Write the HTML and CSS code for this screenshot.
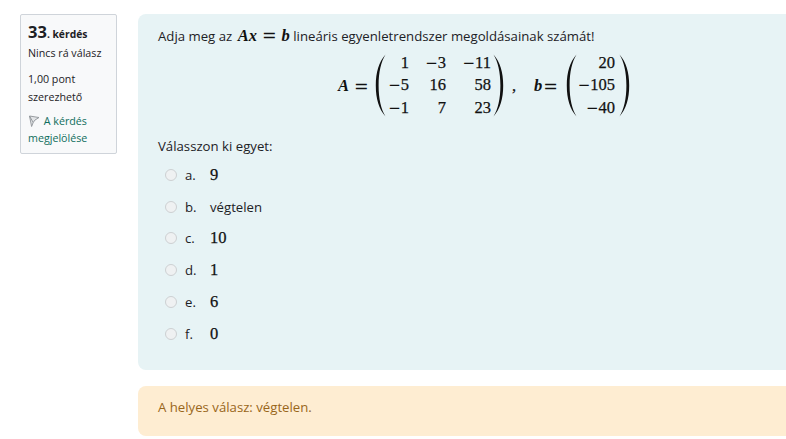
FILE: index.html
```html
<!DOCTYPE html>
<html lang="hu">
<head>
<meta charset="utf-8">
<title>33. kérdés</title>
<link rel="stylesheet" href="styles.css">
</head>
<body>
<div class="page">
  <aside class="info">
    <h3 class="qno"><span class="num">33</span>. kérdés</h3>
    <div class="state">Nincs rá válasz</div>
    <div class="grade">1,00 pont szerezhető</div>
    <div class="flag">
      <svg class="flag-icon" width="12" height="12" viewBox="0 0 12 12"><path d="M1.5 1 L11 2.5 L7 5 L5.2 7.5 L3.6 11.5 Z" fill="#e3e5e7" stroke="#8f9397" stroke-width=".9" stroke-linejoin="round"/><path d="M1.5 1 L5.2 7.5" fill="none" stroke="#8f9397" stroke-width=".9"/></svg>
      <a href="#">A kérdés megjelölése</a>
    </div>
  </aside>
  <main class="content">
    <section class="formulation">
      <p class="qtext">Adja meg az <span class="m inline"><i>Ax</i><span class="eq-in">=</span><i>b</i></span> lineáris egyenletrendszer megoldásainak számát!</p>
      <div class="display m">
        <i>A</i><span class="eq">=</span>
        <svg class="paren" width="11" height="63" viewBox="0 0 11 63"><path d="M10.5 .5 C4 8 .8 18 .8 31.5 C.8 45 4 55 10.5 62.5 C6 55 3.6 45 3.6 31.5 C3.6 18 6 8 10.5 .5Z" fill="#111"/></svg>
        <div class="matrix m3">
          <span>1</span><span><span class="mn">−</span>3</span><span><span class="mn">−</span>11</span>
          <span><span class="mn">−</span>5</span><span>16</span><span>58</span>
          <span><span class="mn">−</span>1</span><span>7</span><span>23</span>
        </div>
        <svg class="paren" width="11" height="63" viewBox="0 0 11 63"><path d="M.5 .5 C7 8 10.2 18 10.2 31.5 C10.2 45 7 55 .5 62.5 C5 55 7.4 45 7.4 31.5 C7.4 18 5 8 .5 .5Z" fill="#111"/></svg>
        <span class="comma">,</span>
        <i>b</i><span class="eq eq-b">=</span>
        <svg class="paren" width="11" height="63" viewBox="0 0 11 63"><path d="M10.5 .5 C4 8 .8 18 .8 31.5 C.8 45 4 55 10.5 62.5 C6 55 3.6 45 3.6 31.5 C3.6 18 6 8 10.5 .5Z" fill="#111"/></svg>
        <div class="matrix m1">
          <span>20</span><span><span class="mn">−</span>105</span><span><span class="mn">−</span>40</span>
        </div>
        <svg class="paren" width="11" height="63" viewBox="0 0 11 63"><path d="M.5 .5 C7 8 10.2 18 10.2 31.5 C10.2 45 7 55 .5 62.5 C5 55 7.4 45 7.4 31.5 C7.4 18 5 8 .5 .5Z" fill="#111"/></svg>
      </div>
      <div class="prompt">Válasszon ki egyet:</div>
      <ul class="answers">
        <li><input type="radio" name="q"><span class="letter">a.</span><span class="m val">9</span></li>
        <li><input type="radio" name="q"><span class="letter">b.</span><span>végtelen</span></li>
        <li><input type="radio" name="q"><span class="letter">c.</span><span class="m val">10</span></li>
        <li><input type="radio" name="q"><span class="letter">d.</span><span class="m val">1</span></li>
        <li><input type="radio" name="q"><span class="letter">e.</span><span class="m val">6</span></li>
        <li><input type="radio" name="q"><span class="letter">f.</span><span class="m val">0</span></li>
      </ul>
    </section>
    <section class="feedback">A helyes válasz: végtelen.</section>
  </main>
</div>
</body>
</html>
```
FILE: styles.css
```css
html, body { margin: 0; padding: 0; height: 100%; overflow: hidden; background: #fff; }
body { font-family: "Open Sans", "Noto Sans", sans-serif; font-size: 13.2px; color: #1d2125; }
.page { display: flex; align-items: flex-start; gap: 21px; padding: 14px 0 0 20px; }
.info { width: 95px; height: 138px; flex: none; background: #f8f9fa; border: 1px solid #cfd4da; border-radius: 2px; font-size: 10.7px; line-height: 17px; }
.qno { margin: 7px 0 0 7px; font-size: 10.3px; font-weight: 700; line-height: 20px; color: #1d2125; }
.num { font-size: 16.5px; }
.state { margin: 1px 0 0 7px; }
.grade { margin: 8px 6px 0 7px; line-height: 18px; }
.flag { margin: 7px 4px 0 7px; }
.flag-icon { vertical-align: -2px; margin-right: 1px; }
.flag a { color: #0f6e5c; text-decoration: none; }
.content { flex: 1; min-width: 0; }
.formulation { background: #e7f3f5; border-radius: 8px 0 0 8px; height: 356px; padding: 12px 0 0 20px; box-sizing: border-box; }
.qtext { margin: 0; line-height: 18px; }
.m { font-family: "Liberation Serif", "DejaVu Serif", serif; font-size: 16.5px; font-weight: 400; color: #111; -webkit-text-stroke: 0.25px #111; }
.m i { font-weight: 700; -webkit-text-stroke: 0; }
.inline { margin-left: 2px; }
.mn { font-family: "DejaVu Sans", sans-serif; font-size: 15px; -webkit-text-stroke: 0; }
.eq-in, .eq { font-family: "DejaVu Sans", sans-serif; font-size: 17.5px; -webkit-text-stroke: 0; }
.eq-in { margin: 0 5px; }
.display { display: flex; align-items: center; height: 63px; margin: 9px 0 0 180px; }
.eq { margin: 0 6.3px 0 5px; }
.eq-b { margin: 0 8px 0 1px; }
.paren { flex: none; }
.matrix { display: grid; row-gap: 4px; line-height: 18.5px; justify-items: end; margin: 0 2px 0 1px; }
.m3 { grid-template-columns: 22px 37px 45px; }
.m1 { grid-template-columns: 37px; margin-right: 4px; }
.comma { margin: 0 18px 0 8px; }
.prompt { margin-top: 20px; line-height: 18px; }
.answers { list-style: none; margin: 4px 0 0; padding: 0 0 0 7px; }
.answers li { display: flex; align-items: center; height: 31.8px; }
.answers input { appearance: none; -webkit-appearance: none; margin: 0; width: 12px; height: 12px; border: 1px solid #cdd0d2; border-radius: 50%; background: #eff1f2; flex: none; }
.letter { margin-left: 8px; width: 25px; flex: none; }
.feedback { margin-top: 16px; height: 50px; line-height: 43px; padding-left: 20px; background: #feedd2; border-radius: 8px 0 0 8px; color: #99661a; box-sizing: border-box; }
```
